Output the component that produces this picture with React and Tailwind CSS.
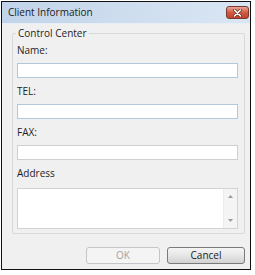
import React from 'react';

const font = { fontFamily: '"Open Sans", "Noto Sans", sans-serif' };

function Field({ label, tone, first }) {
  return (
    <div className={first ? '' : 'mt-[7px]'}>
      <div className="h-[13px] text-[10px] leading-[13px] text-[#1e1e1e]">{label}</div>
      <div
        className={`mt-[6px] h-[15px] w-[221px] bg-white border ${
          tone === 'blue' ? 'border-[#b3c8dc]' : 'border-[#cfcfcf]'
        }`}
      />
    </div>
  );
}

function CloseButton() {
  return (
    <div className="flex h-[13px] w-[23px] items-center justify-center rounded-[3px] border border-[#7a3a2e] bg-gradient-to-b from-[#e9a796] via-[#cf5a45] to-[#c2412b]">
      <svg width="9" height="8" viewBox="0 0 9 8">
        <path d="M1.5 1 L7.5 7 M7.5 1 L1.5 7" stroke="#6b2a20" strokeWidth="3" strokeLinecap="round" />
        <path d="M1.5 1 L7.5 7 M7.5 1 L1.5 7" stroke="#ffffff" strokeWidth="1.6" strokeLinecap="round" />
      </svg>
    </div>
  );
}

export default function App() {
  return (
    <div className="h-[275px] w-[255px] bg-white pl-[1px] pt-[1px]" style={font}>
      <div className="flex h-[269px] w-[250px] flex-col border border-[#111111]">
        {/* title bar */}
        <div className="flex h-[21px] items-center justify-between bg-gradient-to-r from-[#c2d4ea] to-[#dae6f3] pl-[6px] pr-[1px]">
          <span className="text-[10px] leading-[13px] text-[#1b1b1b]">Client Information</span>
          <CloseButton />
        </div>

        {/* body */}
        <div className="flex-1 border-t border-[#e8eef5] bg-[#f0f0f0] pl-[10px] pt-[9px]">
          <div className="relative h-[201px] w-[233px] rounded-[2px] border border-[#d5dadf] pl-[4px] pt-[10px]">
            <span className="absolute -top-[7px] left-[3px] bg-[#f0f0f0] px-[2px] text-[10px] leading-[13px] text-[#1e1e1e]">
              Control Center
            </span>
            <Field label="Name:" tone="blue" first />
            <Field label="TEL:" tone="blue" />
            <Field label="FAX:" tone="gray" />
            <div className="mt-[7px]">
              <div className="h-[13px] text-[10px] leading-[13px] text-[#1e1e1e]">Address</div>
              <div className="mt-[8px] flex h-[41px] w-[221px] justify-end border border-[#d3d3d3] bg-white">
                <div className="flex w-[14px] flex-col items-center justify-between border-l border-[#ececec] bg-[#f4f4f4] py-[6px]">
                  <svg width="5" height="3" viewBox="0 0 5 3">
                    <path d="M0 3 L2.5 0 L5 3 Z" fill="#9a9a9a" />
                  </svg>
                  <svg width="5" height="3" viewBox="0 0 5 3">
                    <path d="M0 0 L2.5 3 L5 0 Z" fill="#9a9a9a" />
                  </svg>
                </div>
              </div>
            </div>
          </div>

          {/* buttons */}
          <div className="mt-[13px] flex w-[233px] justify-end gap-[7px]">
            <div className="flex h-[17px] w-[74px] items-center justify-center rounded-[3px] border border-[#c2c6c9] bg-[#f4f4f4] text-[10px] text-[#a3a3a3]">
              OK
            </div>
            <div className="flex h-[17px] w-[78px] items-center justify-center rounded-[3px] border border-[#7a7a7a] bg-gradient-to-b from-[#f5f5f5] via-[#e6e6e6] to-[#d2d2d2] text-[10px] text-[#1b1b1b]">
              Cancel
            </div>
          </div>
        </div>
      </div>
    </div>
  );
}
